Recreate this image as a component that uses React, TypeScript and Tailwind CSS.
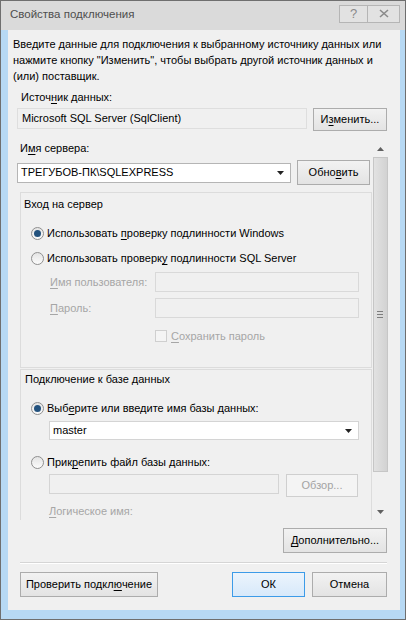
import React from "react";

const font = { fontFamily: '"Liberation Sans", Arial, sans-serif' };

const btn =
  "flex items-center justify-center whitespace-nowrap border border-[#acacac] bg-gradient-to-b from-[#f2f2f2] to-[#e3e3e3] text-black";
const btnDisabled =
  "flex items-center justify-center whitespace-nowrap border border-[#cfcfcf] bg-[#f4f4f4] text-[#a3a3a3]";
const btnDefault =
  "flex items-center justify-center whitespace-nowrap border border-[#3c9be8] bg-gradient-to-b from-[#ecf4fc] to-[#d7e9fa] text-black";

function U({ children }: { children: React.ReactNode }) {
  return <span className="underline underline-offset-2">{children}</span>;
}

function Radio({ checked, children }: { checked?: boolean; children: React.ReactNode }) {
  return (
    <div className="flex items-center h-[16px] leading-[16px]">
      <span className="w-[13px] h-[13px] rounded-full border border-[#8f8f8f] bg-gradient-to-b from-[#e4e4e4] to-[#fbfbfb] flex items-center justify-center">
        {checked && <span className="w-[7px] h-[7px] rounded-full bg-[#23527e]" />}
      </span>
      <span className="ml-[3px]">{children}</span>
    </div>
  );
}

function Arrow() {
  return (
    <svg width="7" height="4" viewBox="0 0 7 4">
      <path d="M0 0h7L3.5 4z" fill="#222" />
    </svg>
  );
}

function Scrollbar() {
  return (
    <div className="w-[16px] h-full flex flex-col items-center bg-[#f0f0f0]">
      <div className="h-[17px] flex items-center justify-center">
        <svg width="7" height="4" viewBox="0 0 7 4">
          <path d="M3.5 0L7 4H0z" fill="#606060" />
        </svg>
      </div>
      <div className="w-[15px] h-[315px] border border-[#c6c6c6] bg-gradient-to-r from-[#e2e2e2] to-[#d2d2d2] flex items-center justify-center">
        <div className="flex flex-col gap-[2px]">
          <div className="w-[6px] h-px bg-[#7d7d7d]" />
          <div className="w-[6px] h-px bg-[#7d7d7d]" />
          <div className="w-[6px] h-px bg-[#7d7d7d]" />
        </div>
      </div>
      <div className="flex-1" />
      <div className="h-[17px] flex items-center justify-center">
        <svg width="7" height="4" viewBox="0 0 7 4">
          <path d="M0 0h7L3.5 4z" fill="#606060" />
        </svg>
      </div>
    </div>
  );
}

export default function App() {
  return (
    <div style={font} className="w-[406px] h-[620px] text-[11px] text-black whitespace-nowrap">
      <div className="w-[406px] h-[620px] border border-[#6f6f6f] bg-[#b7d9f4] flex flex-col">
        {/* title bar */}
        <div className="h-[29px] shrink-0 bg-[#dadada] flex items-center pl-[9px] pr-[5px]">
          <span className="text-[#4e4e4e] text-[11.5px] mt-[-2px]">Свойства подключения</span>
          <div className="flex-1" />
          <div className="flex mt-[-4px]">
            <div className="w-[29px] h-[18px] border border-[#b5b5b5] bg-[#e2e2e2] flex items-center justify-center text-[#8a8a8a] text-[13px]">
              ?
            </div>
            <div className="w-[32px] h-[18px] border border-l-0 border-[#b5b5b5] bg-[#e2e2e2] flex items-center justify-center">
              <svg width="10" height="9" viewBox="0 0 10 9">
                <path d="M1 1l8 7M9 1L1 8" stroke="#8a8a8a" strokeWidth="1.6" />
              </svg>
            </div>
          </div>
        </div>

        {/* client area */}
        <div className="ml-[7px] mr-[5px] h-[580px] shrink-0 bg-[#f0f0f0] flex flex-col">
          <p className="pl-[5px] pt-[6px] leading-[16px]">
            Введите данные для подключения к выбранному источнику данных или
            <br />
            нажмите кнопку "Изменить", чтобы выбрать другой источник данных и
            <br />
            (или) поставщик.
          </p>
          <div className="mt-[5px] pl-[13px] leading-[16px]">
            Источ<U>н</U>ик данных:
          </div>
          <div className="mt-[3px] pl-[9px] flex items-start">
            <div className="w-[290px] h-[21px] border border-[#dedede] bg-[#f0f0f0] flex items-center pl-[4px]">
              Microsoft SQL Server (SqlClient)
            </div>
            <div className={`${btn} ml-[6px] w-[74px] h-[23px]`}>
              И<U>з</U>менить...
            </div>
          </div>

          {/* scrolling panel */}
          <div className="mt-[9px] ml-[6px] w-[374px] h-[380px] shrink-0 flex">
            <div className="w-[358px] h-full overflow-hidden flex flex-col">
              <div className="pl-[6px] leading-[16px] h-[16px] shrink-0">
                И<U>м</U>я сервера:
              </div>
              <div className="mt-[4px] pl-[3px] flex items-center">
                <div className="w-[274px] h-[20px] border border-[#b5b5b5] bg-white flex items-center pl-[3px] pr-[6px]">
                  <span className="flex-1">ТРЕГУБОВ-ПК\SQLEXPRESS</span>
                  <Arrow />
                </div>
                <div className={`${btn} ml-[6px] w-[73px] h-[25px]`}>
                  Обно<U>в</U>ить
                </div>
              </div>

              {/* login group */}
              <div className="mt-[7px] ml-[6px] w-[352px] h-[176px] shrink-0 border border-[#dcdcdc] flex flex-col">
                <div className="mt-[3px] pl-[3px] h-[16px] leading-[16px]">Вход на сервер</div>
                <div className="mt-[13px] pl-[10px]">
                  <Radio checked>
                    Использовать <U>п</U>роверку подлинности Windows
                  </Radio>
                </div>
                <div className="mt-[9px] pl-[10px]">
                  <Radio>
                    Использовать проверк<U>у</U> подлинности SQL Server
                  </Radio>
                </div>
                <div className="mt-[6px] flex items-center h-[20px]">
                  <span className="w-[134px] pl-[29px] text-[#a6a6a6]">
                    <U>И</U>мя пользователя:
                  </span>
                  <div className="w-[204px] h-[20px] border border-[#d9d9d9] bg-[#f0f0f0]" />
                </div>
                <div className="mt-[6px] flex items-center h-[20px]">
                  <span className="w-[134px] pl-[29px] text-[#a6a6a6]">
                    <U>П</U>ароль:
                  </span>
                  <div className="w-[204px] h-[20px] border border-[#d9d9d9] bg-[#f0f0f0]" />
                </div>
                <div className="mt-[10px] pl-[134px] flex items-center h-[16px]">
                  <span className="w-[12px] h-[12px] border border-[#cfcfcf] bg-[#f4f4f4]" />
                  <span className="ml-[4px] text-[#a6a6a6]">
                    <U>С</U>охранить пароль
                  </span>
                </div>
              </div>

              {/* database group */}
              <div className="mt-[1px] ml-[6px] w-[352px] h-[200px] shrink-0 border border-[#dcdcdc] flex flex-col">
                <div className="mt-[1px] pl-[4px] h-[16px] leading-[16px]">Подключение к базе данных</div>
                <div className="mt-[13px] pl-[10px]">
                  <Radio checked>
                    Выб<U>е</U>рите или введите имя базы данных:
                  </Radio>
                </div>
                <div className="mt-[5px] ml-[28px] w-[310px] h-[19px] border border-[#d4d4d4] bg-white flex items-center pl-[3px] pr-[6px]">
                  <span className="flex-1">master</span>
                  <Arrow />
                </div>
                <div className="mt-[14px] pl-[10px]">
                  <Radio>
                    Прик<U>р</U>епить файл базы данных:
                  </Radio>
                </div>
                <div className="mt-[4px] ml-[28px] flex items-start">
                  <div className="w-[230px] h-[20px] border border-[#d4d4d4] bg-[#f0f0f0]" />
                  <div className={`${btnDisabled} ml-[7px] w-[72px] h-[23px]`}>Обзор...</div>
                </div>
                <div className="mt-[6px] pl-[28px] h-[16px] leading-[16px] text-[#a6a6a6]">
                  <U>Л</U>огическое имя:
                </div>
              </div>
            </div>
            <Scrollbar />
          </div>

          <div className="mt-[8px] flex justify-end pr-[13px]">
            <div className={`${btn} w-[104px] h-[25px]`}>
              <U>Д</U>ополнительно...
            </div>
          </div>
          <div className="mt-[9px] ml-[12px] mr-[13px] h-[2px] border-t border-[#d5d5d5] border-b border-b-white" />
          <div className="mt-[8px] pl-[12px] pr-[13px] flex items-center">
            <div className={`${btn} w-[138px] h-[25px]`}>
              Проверить подкл<U>ю</U>чение
            </div>
            <div className="flex-1" />
            <div className={`${btnDefault} w-[73px] h-[25px]`}>ОК</div>
            <div className={`${btn} ml-[7px] w-[75px] h-[25px]`}>Отмена</div>
          </div>
        </div>
      </div>
    </div>
  );
}
